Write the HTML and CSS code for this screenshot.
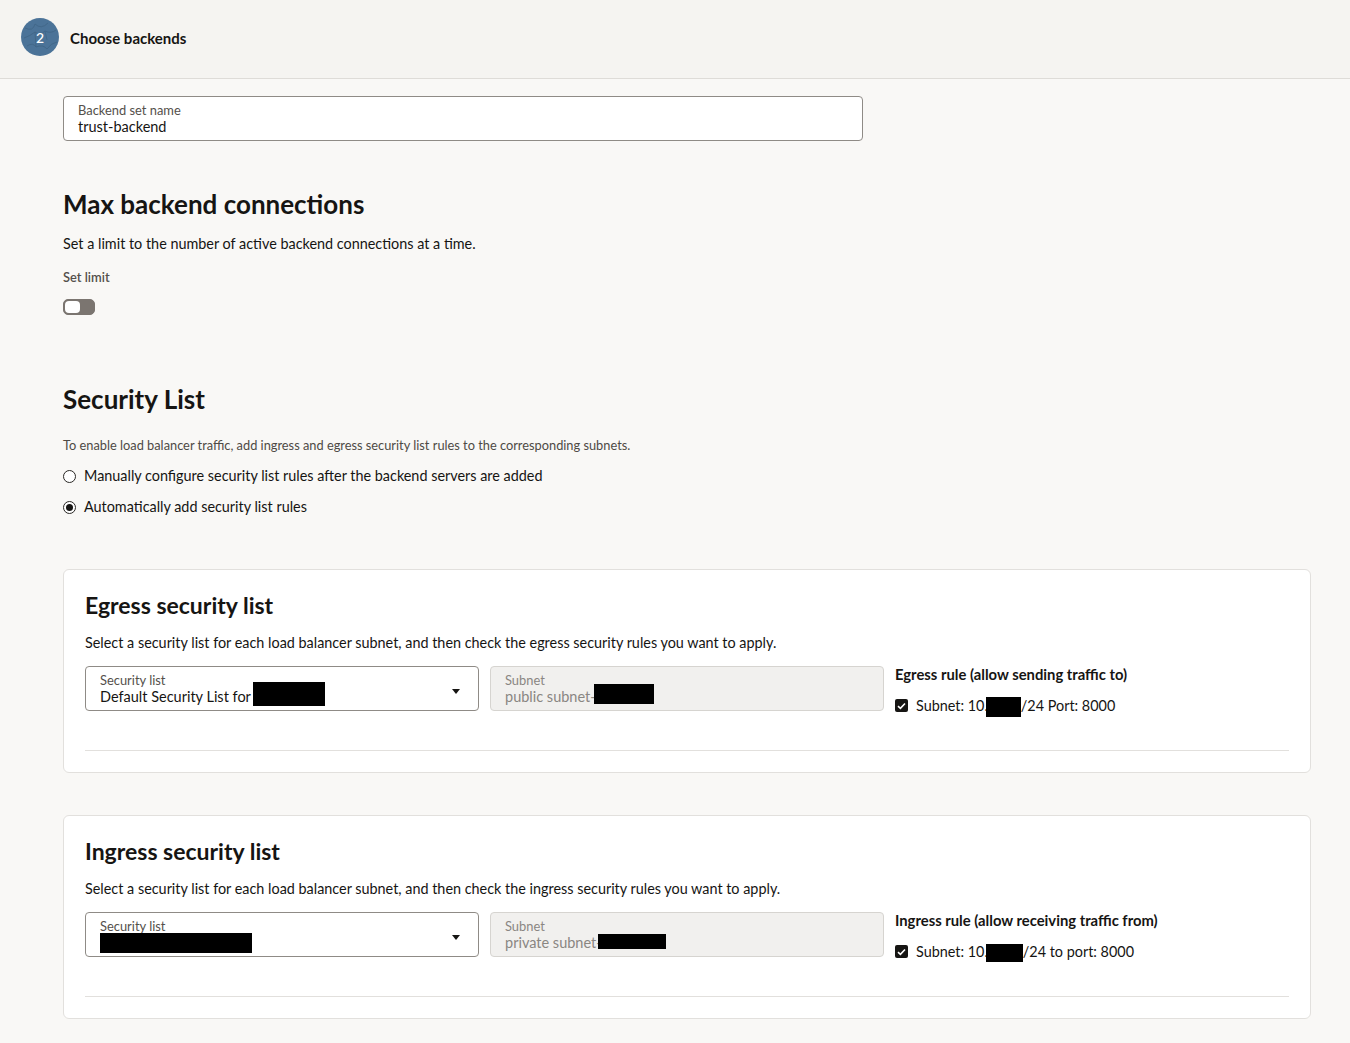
FILE: index.html
```html
<!DOCTYPE html>
<html lang="en">
<head>
<meta charset="utf-8">
<title>Choose backends</title>
<link rel="stylesheet" href="styles.css">
</head>
<body>
<header class="step-header">
  <div class="step-badge">
    <svg class="step-pattern" width="38" height="38" viewBox="0 0 38 38">
      <circle cx="19" cy="19" r="19" fill="#4b7398"/>
      <g fill="none" stroke="#3d6282" stroke-width="0.8" opacity="0.8">
        <path d="M4 10 Q12 14 14 6"/>
        <path d="M14 6 Q20 12 27 5"/>
        <path d="M14 14 Q19 18 24 13"/>
        <path d="M3 20 Q9 18 14 14"/>
        <path d="M24 13 Q30 16 35 12"/>
        <path d="M6 28 Q12 24 15 29"/>
        <path d="M15 29 Q22 26 26 31"/>
        <path d="M26 31 Q30 25 36 24"/>
        <path d="M14 14 L15 29"/>
        <path d="M24 13 L26 22"/>
      </g>
    </svg>
    <span class="step-num">2</span>
  </div>
  <span class="step-title">Choose backends</span>
</header>

<main class="content">
  <div class="text-field">
    <span class="field-label">Backend set name</span>
    <span class="field-value">trust-backend</span>
  </div>

  <section class="section max-conn">
    <h2 class="section-title">Max backend connections</h2>
    <p class="section-desc">Set a limit to the number of active backend connections at a time.</p>
    <div class="switch-label">Set limit</div>
    <div class="switch"><span class="switch-knob"></span></div>
  </section>

  <section class="section sec-list">
    <h2 class="section-title">Security List</h2>
    <p class="small-desc">To enable load balancer traffic, add ingress and egress security list rules to the corresponding subnets.</p>
    <div class="radio-row"><span class="radio"></span>Manually configure security list rules after the backend servers are added</div>
    <div class="radio-row"><span class="radio checked"></span>Automatically add security list rules</div>
  </section>

  <div class="card egress">
    <h3 class="card-title">Egress security list</h3>
    <p class="card-desc">Select a security list for each load balancer subnet, and then check the egress security rules you want to apply.</p>
    <div class="card-row">
      <div class="select-field">
        <div class="sf-text">
          <span class="field-label">Security list</span>
          <span class="field-value">Default Security List for&nbsp;<span class="redact r-sel1"></span></span>
        </div>
        <span class="caret"></span>
      </div>
      <div class="readonly-field">
        <span class="field-label">Subnet</span>
        <span class="field-value">public subnet-<span class="redact r-sub1"></span></span>
      </div>
      <div class="rule-col">
        <div class="rule-title">Egress rule (allow sending traffic to)</div>
        <div class="check-row"><span class="checkbox"><svg width="9" height="8" viewBox="0 0 9 8"><path d="M1 4.2 L3.4 6.4 L8 1.5" fill="none" stroke="#fff" stroke-width="1.6"/></svg></span>Subnet: 10.<span class="redact r-rule1"></span>/24 Port: 8000</div>
      </div>
    </div>
    <div class="card-divider"></div>
  </div>

  <div class="card ingress">
    <h3 class="card-title">Ingress security list</h3>
    <p class="card-desc">Select a security list for each load balancer subnet, and then check the ingress security rules you want to apply.</p>
    <div class="card-row">
      <div class="select-field">
        <div class="sf-text">
          <span class="field-label">Security list</span>
          <span class="field-value"><span class="redact r-sel2"></span></span>
        </div>
        <span class="caret"></span>
      </div>
      <div class="readonly-field">
        <span class="field-label">Subnet</span>
        <span class="field-value">private subnet-<span class="redact r-sub2"></span></span>
      </div>
      <div class="rule-col">
        <div class="rule-title">Ingress rule (allow receiving traffic from)</div>
        <div class="check-row"><span class="checkbox"><svg width="9" height="8" viewBox="0 0 9 8"><path d="M1 4.2 L3.4 6.4 L8 1.5" fill="none" stroke="#fff" stroke-width="1.6"/></svg></span>Subnet: 10.<span class="redact r-rule2"></span>/24 to port: 8000</div>
      </div>
    </div>
    <div class="card-divider"></div>
  </div>
</main>
</body>
</html>
```

FILE: styles.css
```css
* { box-sizing: border-box; }
html, body { margin: 0; padding: 0; }
body {
  background: #f9f8f6;
  font-family: Lato, "Noto Sans", sans-serif;
  color: #161513;
  font-size: 14.4px;
}
.step-header {
  height: 79px;
  background: #f5f4f1;
  border-bottom: 1px solid #dedcd8;
  display: flex;
  align-items: center;
  padding-left: 21px;
  gap: 11px;
  padding-bottom: 4px;
}
.step-badge {
  position: relative;
  width: 38px;
  height: 38px;
}
.step-pattern { display: block; }
.step-num {
  position: absolute;
  inset: 0;
  display: flex;
  align-items: center;
  justify-content: center;
  color: #fff;
  font-size: 14px;
  font-weight: 500;
}
.step-title {
  font-weight: 700;
  font-size: 15px;
  margin-top: 2px;
}
.content {
  padding: 17px 39px 0 63px;
}
.text-field {
  width: 800px;
  height: 45px;
  background: #fff;
  border: 1px solid #8f8b86;
  border-radius: 4px;
  padding: 5px 14px 0;
  display: flex;
  flex-direction: column;
}
.field-label {
  font-size: 12.9px;
  color: #54504b;
  line-height: 16px;
}
.field-value {
  font-size: 14.5px;
  line-height: 17px;
  height: 17px;
  display: flex;
  align-items: center;
  white-space: nowrap;
}
.section-title {
  font-size: 26px;
  font-weight: 700;
  margin: 0;
  line-height: 30px;
}
.max-conn { margin-top: 48px; }
.section-desc { margin: 16px 0 0; line-height: 18px; }
.switch-label {
  margin-top: 16px;
  font-size: 12.9px;
  line-height: 16px;
  color: #54504b;
  font-weight: 600;
}
.switch {
  margin-top: 14px;
  width: 32px;
  height: 16px;
  border-radius: 5px;
  background: #7b7570;
  border: 1px solid #7b7570;
  position: relative;
}
.switch-knob {
  position: absolute;
  left: 1px;
  top: 1px;
  width: 15px;
  height: 12px;
  background: #fff;
  border-radius: 4px;
}
.sec-list { margin-top: 69px; }
.small-desc {
  margin: 23px 0 0;
  font-size: 12.8px;
  line-height: 16px;
  color: #4e4a45;
}
.radio-row {
  display: flex;
  align-items: center;
  gap: 8px;
  margin-top: 15px;
  line-height: 16px;
}
.radio-row + .radio-row { margin-top: 15px; }
.radio {
  width: 13px;
  height: 13px;
  border: 1px solid #2a2825;
  border-radius: 50%;
  background: #fff;
  display: inline-flex;
  align-items: center;
  justify-content: center;
}
.radio.checked::after {
  content: "";
  width: 7px;
  height: 7px;
  border-radius: 50%;
  background: #161513;
}
.card {
  background: #fff;
  border: 1px solid #e2e0dd;
  border-radius: 6px;
  padding: 20px 21px 21px;
}
.egress { margin-top: 54px; }
.ingress { margin-top: 42px; }
.card-title {
  margin: 0;
  font-size: 23px;
  font-weight: 700;
  line-height: 30px;
}
.card-desc { margin: 14px 0 0; line-height: 18px; }
.card-row {
  margin-top: 14px;
  display: flex;
  gap: 11px;
  align-items: flex-start;
}
.select-field {
  width: 394px;
  height: 45px;
  border: 1px solid #8f8b86;
  border-radius: 4px;
  padding: 5px 14px 0;
  display: flex;
  justify-content: space-between;
  background: #fff;
}
.sf-text { display: flex; flex-direction: column; }
.caret {
  margin-top: 17px;
  margin-right: 4px;
  width: 0;
  height: 0;
  border-left: 4px solid transparent;
  border-right: 4px solid transparent;
  border-top: 5px solid #161513;
}
.readonly-field {
  width: 394px;
  height: 45px;
  border: 1px solid #d6d4d0;
  border-radius: 4px;
  background: #f1f0ee;
  padding: 5px 14px 0;
  display: flex;
  flex-direction: column;
}
.readonly-field .field-label { color: #8a8682; }
.readonly-field .field-value { color: #8a8682; }
.rule-title { font-weight: 700; font-size: 14.8px; line-height: 17px; }
.check-row {
  margin-top: 14px;
  display: flex;
  align-items: center;
  white-space: nowrap;
  line-height: 17px;
  height: 17px;
}
.checkbox {
  width: 13px;
  height: 13px;
  border-radius: 2px;
  background: #161513;
  display: inline-flex;
  align-items: center;
  justify-content: center;
  margin-right: 8px;
}
.redact { display: inline-block; background: #000; position: relative; flex: none; }
.r-sel1 { width: 72px; height: 24px; margin-left: -1px; top: -3px; }
.r-sub1 { width: 60px; height: 20px; margin-left: -2px; top: -3px; }
.r-rule1 { width: 35px; height: 20px; margin-left: -2px; top: 1px; }
.r-sel2 { width: 152px; height: 20px; }
.r-sub2 { width: 68px; height: 15px; margin-left: -4px; top: -1px; }
.r-rule2 { width: 37px; height: 18px; margin-left: -2px; top: 1px; }
.card-divider {
  margin-top: 36px;
  height: 1px;
  background: #e2e0dd;
}
```
